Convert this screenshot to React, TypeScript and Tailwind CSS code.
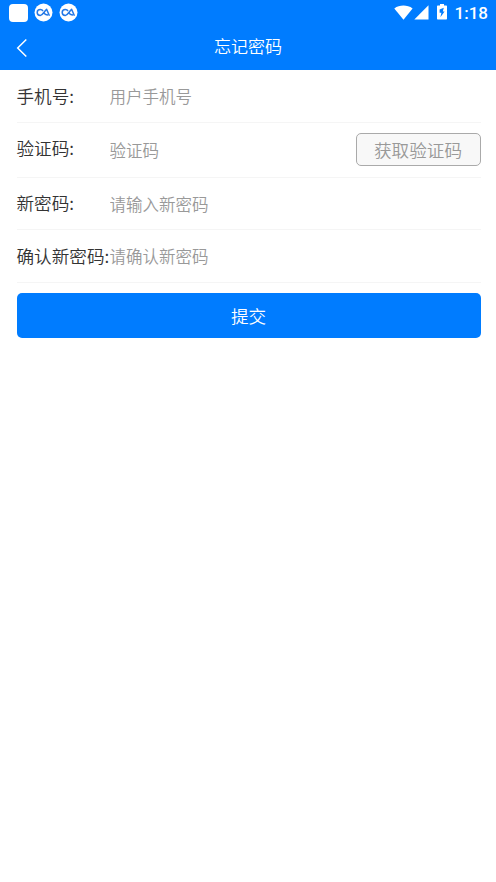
import React from 'react';

interface FieldProps {
  label: string;
  placeholder: string;
  type?: string;
  className: string;
  labelClassName?: string;
  children?: React.ReactNode;
}

const CloudIcon = () => (
  <svg className="w-[19px] h-[19px]" viewBox="0 0 19 19" fill="none">
    <circle cx="9.5" cy="9.5" r="9" fill="#fff" />
    <path
      d="M9 8C8.4 7 7.5 6.6 6.3 6.6C4.5 6.6 3.2 7.9 3.2 9.5C3.2 11.1 4.5 12.4 6.3 12.4C8.8 12.4 10 8.6 12.6 6.3L15.4 12.8M9.6 9.4C10.6 11.2 11.8 12 14 12"
      stroke="#2478e6"
      strokeWidth="1.5"
      strokeLinejoin="round"
    />
  </svg>
);

const StatusBar = () => (
  <div className="h-[25px] pl-[9px] pr-[8px] flex items-center justify-between text-white">
    <div className="flex items-center gap-[6px]">
      <div className="w-[19px] h-[18px] rounded-[4px] bg-white" />
      <CloudIcon />
      <CloudIcon />
    </div>
    <div className="flex items-center">
      <svg className="w-[19px] h-[15px]" viewBox="0 0 19 15" fill="#fff">
        <path d="M0.3 3.4C5.6 -0.4 13.2 -0.4 18.6 3.4L9.5 14.7Z" />
      </svg>
      <svg className="w-[15px] h-[15px] ml-[1px]" viewBox="0 0 15 15" fill="#fff">
        <path d="M14.5 0.3V14.5H0.3Z" />
      </svg>
      <svg className="w-[10px] h-[16px] ml-[8px] -mt-[2px]" viewBox="0 0 10 16">
        <path d="M3 0H7V1.6H9C9.6 1.6 10 2 10 2.6V14.6C10 15.2 9.6 15.6 9 15.6H1C0.4 15.6 0 15.2 0 14.6V2.6C0 2 0.4 1.6 1 1.6H3Z" fill="#fff" />
        <path d="M6.8 3.8L2.6 5.4V8.8H4.4L3.4 13.2L7.6 7.4H5.8Z" fill="#007cff" />
      </svg>
      <span className="ml-[8px] font-['Roboto',sans-serif] text-[17px] leading-[20px] font-medium">1:18</span>
    </div>
  </div>
);

const Field: React.FC<FieldProps> = ({ label, placeholder, type = 'text', className, labelClassName = '', children }) => (
  <div className={`flex items-center border-b border-[#f5f5f5] ${className}`}>
    <label className={`w-[93px] flex-shrink-0 whitespace-nowrap text-[17.6px] leading-[26px] text-[#333] ${labelClassName}`}>
      {label}
    </label>
    <input
      type={type}
      placeholder={placeholder}
      className="flex-1 min-w-0 h-[30px] bg-transparent text-[16.5px] text-[#333] placeholder:text-[#999] outline-none"
    />
    {children}
  </div>
);

export default function App() {
  return (
    <div className="min-h-[882px] bg-white font-[350] font-['Noto_Sans_CJK_SC',sans-serif]">
      <header className="h-[70px] bg-[#007cff] text-white">
        <StatusBar />
        <div className="h-[45px] px-4 grid grid-cols-[40px_1fr_40px] items-center">
          <button type="button" aria-label="返回">
            <svg className="w-[12px] h-[20px]" viewBox="0 0 12 20" fill="none">
              <path d="M10.3 1.5L1.7 10L10.3 18.5" stroke="#fff" strokeWidth="1.5" />
            </svg>
          </button>
          <h1 className="-mt-[4px] text-center text-[17px] leading-[24px]">忘记密码</h1>
        </div>
      </header>
      <main className="pl-[16.5px] pr-[15.5px]">
        <Field label="手机号:" placeholder="用户手机号" className="h-[53px]" labelClassName="-mt-px" />
        <Field label="验证码:" placeholder="验证码" className="h-[55px]" labelClassName="-mt-[4px]">
          <button
            type="button"
            className="w-[125px] h-[33px] -mt-px rounded-[5px] border border-[#aaa] bg-[#f8f8f8] text-[17.6px] leading-[30px] text-[#999]"
          >
            获取验证码
          </button>
        </Field>
        <Field label="新密码:" placeholder="请输入新密码" type="password" className="h-[52px]" labelClassName="-mt-[2px]" />
        <Field label="确认新密码:" placeholder="请确认新密码" type="password" className="h-[53px]" labelClassName="-mt-px" />
        <button type="button" className="mt-[10px] w-full h-[45px] rounded-[5px] bg-[#007cff] pt-px text-[17.6px] text-white">
          提交
        </button>
      </main>
    </div>
  );
}
